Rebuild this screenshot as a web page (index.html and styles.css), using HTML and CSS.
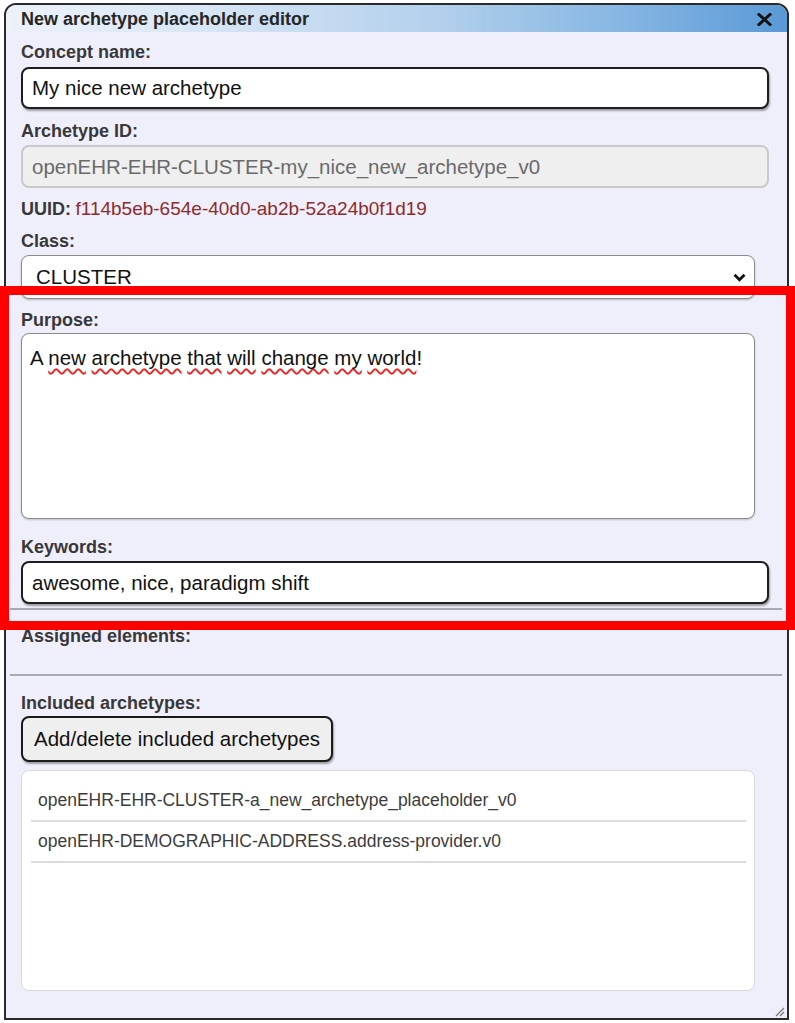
FILE: index.html
```html
<!DOCTYPE html>
<html lang="en">
<head>
<meta charset="utf-8">
<title>New archetype placeholder editor</title>
<link rel="stylesheet" href="styles.css">
</head>
<body>
<div class="dialog">
  <div class="titlebar">
    <span class="title">New archetype placeholder editor</span>
    <svg class="close" width="15" height="13" viewBox="0 0 15 13"><path d="M2 1.5 L13 11.5 M13 1.5 L2 11.5" stroke="#111" stroke-width="3" stroke-linecap="square"/></svg>
  </div>
  <div class="content">
    <div class="label">Concept name:</div>
    <div class="field field-dark m4">My nice new archetype</div>

    <div class="label m11">Archetype ID:</div>
    <div class="field field-disabled m3">openEHR-EHR-CLUSTER-my_nice_new_archetype_v0</div>

    <div class="uuid m10"><span class="uuid-key">UUID:</span> <span class="uuid-val">f114b5eb-654e-40d0-ab2b-52a24b0f1d19</span></div>

    <div class="label m10">Class:</div>
    <div class="select m3">
      <span>CLUSTER</span>
      <svg width="13" height="9" viewBox="0 0 13 9"><path d="M1.5 1.8 L6.5 6.8 L11.5 1.8" fill="none" stroke="#111" stroke-width="2.8"/></svg>
    </div>

    <div class="label m10">Purpose:</div>
    <div class="textarea m2">A <span class="spell">new</span> <span class="spell">archetype</span> <span class="spell">that</span> <span class="spell">will</span> <span class="spell">change</span> <span class="spell">my</span> <span class="spell">world</span>!</div>

    <div class="label m17">Keywords:</div>
    <div class="field field-dark m3 h43">awesome, nice, paradigm shift</div>

    <div class="sep m4"></div>
    <div class="label m15">Assigned elements:</div>
    <div class="sep m27"></div>

    <div class="label m16">Included archetypes:</div>
    <div class="row m2"><button class="btn">Add/delete included archetypes</button></div>

    <div class="list m8">
      <div class="item">openEHR-EHR-CLUSTER-a_new_archetype_placeholder_v0</div>
      <div class="item">openEHR-DEMOGRAPHIC-ADDRESS.address-provider.v0</div>
    </div>
  </div>
  <svg class="grip" width="12" height="12" viewBox="0 0 12 12"><path d="M11 3 L3 11 M11 7 L7 11" stroke="#777" stroke-width="1.2"/></svg>
</div>
<div class="annotation"></div>
</body>
</html>
```
FILE: styles.css
```css
* { box-sizing: border-box; }

html, body {
  margin: 0;
  padding: 0;
}

body {
  width: 795px;
  height: 1023px;
  overflow: hidden;
  position: relative;
  background: #ffffff;
  font-family: "Liberation Sans", Arial, sans-serif;
  color: #222;
}

.dialog {
  margin: 3px 0 0 4px;
  width: 785px;
  height: 1017px;
  border: 2px solid #2a2a2a;
  border-radius: 12px 12px 0 0;
  background: #efeffb;
  display: flex;
  flex-direction: column;
  position: relative;
  overflow: hidden;
}

.titlebar {
  flex: none;
  height: 27px;
  display: flex;
  align-items: center;
  justify-content: space-between;
  padding: 0 15px 0 15px;
  background: linear-gradient(to right, #edf2f9 0%, #d8e6f5 25%, #b3d0ec 55%, #84b5e2 80%, #5a99d6 100%);
}

.title {
  font-size: 18px;
  font-weight: bold;
  color: #262626;
  line-height: 22px;
}

.close { display: block; margin-top: 1px; }

.content {
  display: flex;
  flex-direction: column;
  padding: 9px 18px 0 15px;
}

.label {
  font-size: 18px;
  font-weight: bold;
  line-height: 22px;
  height: 22px;
  color: #383838;
}

.m2 { margin-top: 2px; }
.m3 { margin-top: 3px; }
.m4 { margin-top: 4px; }
.m8 { margin-top: 8px; }
.m10 { margin-top: 10px; }
.m11 { margin-top: 11px; }
.m15 { margin-top: 15px; }
.m16 { margin-top: 16px; }
.m17 { margin-top: 17px; }
.m27 { margin-top: 27px; }

.field {
  height: 42px;
  border-radius: 8px;
  font-size: 20.5px;
  display: flex;
  align-items: center;
  padding: 0 9px;
  white-space: nowrap;
}

.h43 { height: 43px; }

.field-dark {
  background: #ffffff;
  border: 2px solid #1e1e1e;
  box-shadow: 1px 2px 2px rgba(0, 0, 0, 0.35);
  color: #111;
}

.field-disabled {
  height: 43px;
  background: #efefef;
  border: 2px solid #c9c9c9;
  color: #6a6a6a;
}

.uuid {
  height: 22px;
  line-height: 22px;
  white-space: nowrap;
}

.uuid-key {
  font-size: 18px;
  font-weight: bold;
  color: #383838;
}

.uuid-val {
  font-size: 19px;
  color: #8e2b2b;
}

.select {
  width: 734px;
  height: 44px;
  background: #fff;
  border: 1px solid #8c8c8c;
  border-radius: 8px;
  box-shadow: 0 1px 2px rgba(0, 0, 0, 0.25);
  display: flex;
  align-items: center;
  justify-content: space-between;
  padding: 0 8px 0 14px;
  font-size: 20.5px;
  color: #111;
}

.select svg { display: block; }

.textarea {
  width: 734px;
  height: 186px;
  background: #fff;
  border: 1px solid #8c8c8c;
  border-radius: 8px;
  box-shadow: 0 1px 2px rgba(0, 0, 0, 0.2);
  padding: 12px 8px;
  font-size: 20.5px;
  line-height: 23px;
  color: #111;
}

.spell {
  text-decoration: underline wavy #f52020;
  text-decoration-thickness: 1.5px;
  text-decoration-skip-ink: none;
  text-underline-offset: 3px;
}

.sep {
  height: 2px;
  background: #a9a9b0;
  margin-left: -11px;
  margin-right: -13px;
}

.row { display: flex; }

.btn {
  height: 46px;
  padding: 0 11px;
  background: #efefef;
  border: 2px solid #1a1a1a;
  border-radius: 8px;
  box-shadow: 1px 2px 2px rgba(0, 0, 0, 0.35);
  font-family: "Liberation Sans", Arial, sans-serif;
  font-size: 20.5px;
  color: #111;
}

.list {
  width: 734px;
  height: 221px;
  background: #fff;
  border: 1px solid #dadada;
  border-radius: 8px;
  padding: 10px 8px 0 9px;
}

.item {
  height: 41px;
  border-bottom: 2px solid #dcdcdc;
  font-size: 17.5px;
  color: #3c3c3c;
  display: flex;
  align-items: center;
  padding: 0 7px;
  white-space: nowrap;
}

.grip {
  position: absolute;
  right: 2px;
  bottom: 1px;
}

.annotation {
  position: absolute;
  left: 0;
  top: 286px;
  width: 795px;
  height: 344px;
  border: 9px solid #fe0000;
  pointer-events: none;
}
```
